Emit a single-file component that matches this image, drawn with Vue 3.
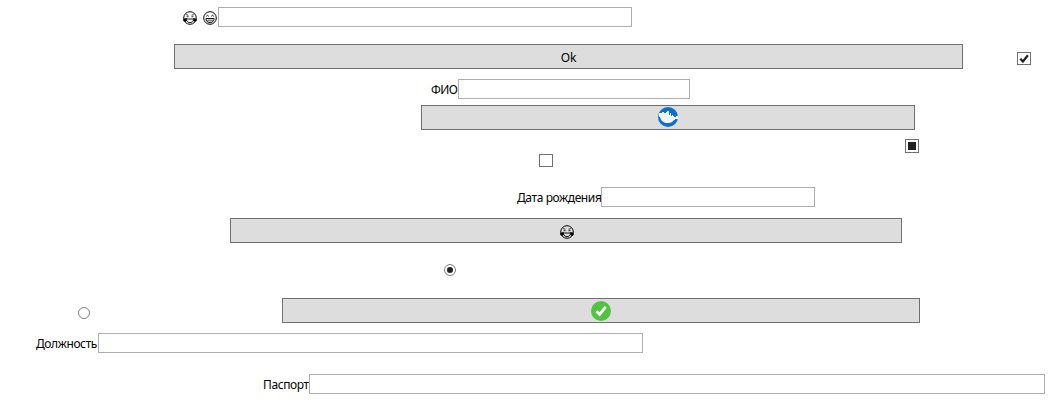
<script setup>
import { ref } from 'vue'

const values = ref({ emoji: '', name: '', birth: '', position: '', passport: '' })
</script>

<template>
  <svg class="defs" aria-hidden="true">
    <symbol id="face-tears" viewBox="0 0 14 14">
      <circle cx="7" cy="7" r="6.300" fill="none" stroke="currentColor" stroke-width="1" />
      <path d="M3.200 3.600 5.400 4.300M10.800 3.600 8.600 4.300M3.600 5.700h2M8.400 5.700h2" fill="none" stroke="currentColor" stroke-width=".8" />
      <path d="M3.300 8h7.400M3.600 9.200c.7 3.200 6.100 3.200 6.800 0" fill="none" stroke="currentColor" stroke-width=".9" />
      <path d="M3.800 7C2 7 .2 7.700.2 9c0 1.800 2.500 2.300 3.500.9ZM10.200 7c1.800 0 3.600.7 3.600 2 0 1.800-2.500 2.300-3.500.9Z" fill="currentColor" />
    </symbol>
    <symbol id="face-grin" viewBox="0 0 14 14">
      <circle cx="7" cy="7" r="6.300" fill="none" stroke="currentColor" stroke-width="1" />
      <path d="M3.200 5.300q1.300-1.800 2.600 0M8.200 5.300q1.300-1.800 2.600 0" fill="none" stroke="currentColor" stroke-width=".9" />
      <path d="M2.900 7.500h8.200c0 2.600-1.700 4.200-4.100 4.200S2.900 10.100 2.900 7.500Z" fill="none" stroke="currentColor" stroke-width=".9" />
      <path d="M3 9.400h8M5.200 7.500v3.800M7 7.500v4M8.800 7.500v3.800" stroke="currentColor" stroke-width=".5" opacity=".8" />
    </symbol>
  </svg>

  <main class="form">
    <label class="row emoji-row">
      <span class="label faces">
        <svg class="face"><use href="#face-tears" /></svg>
        <svg class="face"><use href="#face-grin" /></svg>
      </span>
      <input v-model="values.emoji" class="field" type="text" />
    </label>

    <div class="row ok-row">
      <button class="button" type="button"><span class="ok">Ok</span></button>
      <span class="check">
        <svg viewBox="0 0 12 12"><path d="M2.300 5.700 4.900 8.500 9.900 2.200" fill="none" stroke="#212121" stroke-width="2.200" /></svg>
      </span>
    </div>

    <label class="row name-row">
      <span class="label">ФИО</span>
      <input v-model="values.name" class="field" type="text" />
    </label>

    <div class="row city-row">
      <button class="button" type="button">
        <svg class="badge" viewBox="0 0 20 20">
          <circle cx="10" cy="10" r="10" fill="#0a70c8" />
          <path d="M1 10V6h3V5h2v1h2V5h1V4h2v4h1V6h1v3h1V8h1v1h1v1h2V9h2v3h-3v1h-1c-1.200 1.800-3 3-6 3-4.200 0-7.200-2-8-6Z" fill="#f3f4f5" />
        </svg>
      </button>
    </div>

    <div class="row mixed-row"><span class="check"><i class="mixed"></i></span></div>
    <div class="row empty-row"><span class="check"></span></div>

    <label class="row birth-row">
      <span class="label">Дата рождения</span>
      <input v-model="values.birth" class="field" type="text" />
    </label>

    <div class="row face-row">
      <button class="button" type="button"><svg class="face"><use href="#face-tears" /></svg></button>
    </div>

    <div class="row radio-row"><span class="radio"><i class="dot"></i></span></div>

    <div class="row confirm-row">
      <span class="radio"></span>
      <button class="button" type="button">
        <svg class="badge" viewBox="0 0 20 20">
          <circle cx="10" cy="10" r="10" fill="#52c341" />
          <path d="M5.500 10.300 8.600 13.400 14.700 5.800" fill="none" stroke="#fff" stroke-width="2.800" />
        </svg>
      </button>
    </div>

    <label class="row position-row">
      <span class="label">Должность</span>
      <input v-model="values.position" class="field" type="text" />
    </label>

    <label class="row passport-row">
      <span class="label">Паспорт</span>
      <input v-model="values.passport" class="field" type="text" />
    </label>
  </main>
</template>

<style>
body {
  margin: 0;
  background: #fff;
}
</style>

<style scoped>
.defs {
  display: none;
}

.form {
  box-sizing: border-box;
  width: 1053px;
  height: 403px;
  padding-top: 7px;
  overflow: hidden;
  background: #fff;
  color: #000;
  font: 12px/20px "Noto Sans", "Open Sans", sans-serif;
}

.row {
  display: flex;
  align-items: flex-start;
}

.label {
  flex: none;
  box-sizing: border-box;
  height: 20px;
  line-height: 22px;
  letter-spacing: -0.4px;
  white-space: nowrap;
}

.field {
  box-sizing: border-box;
  height: 20px;
  margin: 0;
  padding: 0 4px;
  border: 1px solid #abadb3;
  border-radius: 0;
  outline: 0;
  background: #fff;
  font: inherit;
}

.button {
  box-sizing: border-box;
  display: flex;
  flex: none;
  align-items: center;
  justify-content: center;
  height: 25px;
  margin: 0;
  padding: 0;
  border: 1px solid #707070;
  border-radius: 0;
  background: #ddd;
  color: #000;
  font: inherit;
}

.ok {
  padding-top: 2px;
  letter-spacing: -0.2px;
}

.face {
  flex: none;
  width: 14px;
  height: 14px;
}

.badge {
  width: 20px;
  height: 20px;
}

.check {
  box-sizing: border-box;
  display: flex;
  align-items: center;
  justify-content: center;
  width: 14px;
  height: 14px;
  border: 1px solid #707070;
  background: #fff;
}

.check svg {
  width: 12px;
  height: 12px;
}

.mixed {
  width: 8px;
  height: 8px;
  background: #212121;
}

.radio {
  box-sizing: border-box;
  display: flex;
  align-items: center;
  justify-content: center;
  width: 12px;
  height: 12px;
  border: 1px solid #808080;
  border-radius: 50%;
  background: #fff;
}

.dot {
  width: 6px;
  height: 6px;
  border-radius: 50%;
  background: #212121;
}

.emoji-row { padding-left: 183px; }
.emoji-row .faces { display: flex; gap: 6px; width: 35px; padding-top: 4px; }
.emoji-row .field { width: 414px; }

.ok-row { margin-top: 17px; padding-left: 174px; }
.ok-row .button { width: 789px; }
.ok-row .check { margin: 8px 0 0 54px; height: 13px; }

.name-row { margin-top: 10px; padding-left: 431px; }
.name-row .label { width: 27px; letter-spacing: -0.6px; }
.name-row .field { width: 232px; }

.city-row { margin-top: 6px; padding-left: 421px; }
.city-row .button { width: 494px; padding-bottom: 1px; }

.mixed-row { margin-top: 9px; padding-left: 905px; }
.empty-row { margin-top: 1px; padding-left: 539px; }
.empty-row .check { height: 13px; }

.birth-row { margin-top: 20px; padding-left: 517px; }
.birth-row .label { width: 84px; }
.birth-row .field { width: 214px; }

.face-row { margin-top: 11px; padding-left: 230px; }
.face-row .button { width: 672px; padding: 2px 0 0 1px; }

.radio-row { margin-top: 21px; padding-left: 444px; }

.confirm-row { margin-top: 22px; padding-left: 78px; }
.confirm-row .radio { margin-top: 9px; }
.confirm-row .button { width: 638px; margin-left: 192px; }

.position-row { margin-top: 10px; padding-left: 36px; }
.position-row .label { width: 62px; }
.position-row .field { width: 545px; }

.passport-row { margin-top: 21px; padding-left: 263px; }
.passport-row .label { width: 46px; }
.passport-row .field { width: 736px; }
</style>
